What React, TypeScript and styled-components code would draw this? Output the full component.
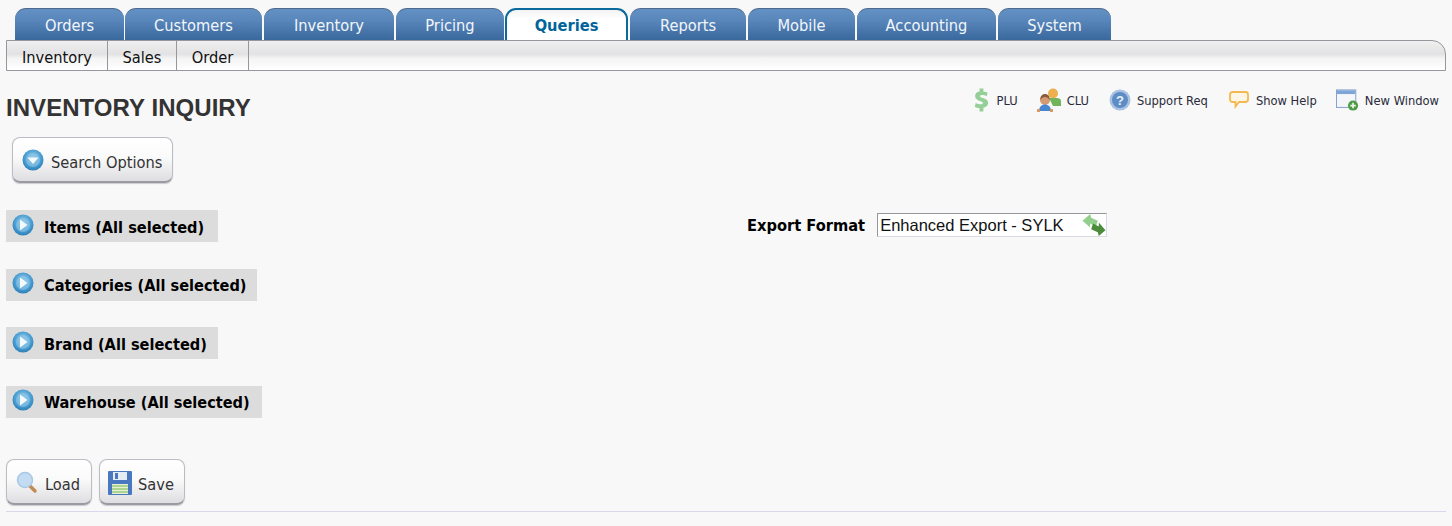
import React from "react"
import styled, { createGlobalStyle } from "styled-components"

const uiFont = `"DejaVu Sans Condensed", "DejaVu Sans", sans-serif`

const GlobalStyle = createGlobalStyle`
  html, body {
    margin: 0;
    padding: 0;
    background: #f8f8f8;
  }
  body {
    font-family: ${uiFont};
    font-stretch: condensed;
    color: #222;
  }
`

const Page = styled.div`
  width: 1452px;
  height: 526px;
  overflow: hidden;
  padding: 8px 6px 0;
  box-sizing: border-box;
`

const TabBar = styled.div`
  display: flex;
  height: 32px;
  padding-left: 9px;
`

const Tab = styled.div<{ $width: number; $gap: number; $active?: boolean }>`
  width: ${p => p.$width}px;
  margin-right: ${p => p.$gap}px;
  box-sizing: border-box;
  display: flex;
  align-items: center;
  justify-content: center;
  padding-top: ${p => (p.$active ? "0" : "2px")};
  border-radius: 11px 11px 0 0;
  font-size: 16.3px;
  color: ${p => (p.$active ? "#00649b" : "#f2f6fb")};
  font-weight: ${p => (p.$active ? "bold" : "normal")};
  border: ${p => (p.$active ? "2px solid #0a6a9c" : "0")};
  border-bottom: 0;
  border-top: ${p => (p.$active ? "2px solid #0a6a9c" : "1px solid #4d6a8e")};
  background: ${p =>
    p.$active
      ? "linear-gradient(#f3f3f3, #ffffff 30%)"
      : "linear-gradient(#6391c4, #5a87bb 35%, #39689d)"};
`

const SubBar = styled.div`
  display: flex;
  height: 31px;
  box-sizing: border-box;
  border: 1px solid #96969c;
  border-radius: 0 14px 0 0;
  background: linear-gradient(#f0f0f0, #e2e2e4 45%, #f4f4f4 60%, #ffffff);
`

const SubItem = styled.div<{ $width: number }>`
  width: ${p => p.$width}px;
  box-sizing: border-box;
  border-right: 1px solid #96969c;
  display: flex;
  align-items: center;
  justify-content: center;
  padding-top: 3px;
  font-size: 16.3px;
  color: #111;
`

const TitleRow = styled.div`
  display: flex;
  justify-content: space-between;
  height: 66px;
`

const Title = styled.h1`
  margin: 23px 0 0;
  font-family: "Liberation Sans", Arial, sans-serif;
  font-stretch: normal;
  font-size: 24px;
  line-height: 28px;
  font-weight: bold;
  letter-spacing: 0.05px;
  color: #333;
`

const QuickLinks = styled.div`
  display: flex;
  padding: 16px 7px 0 0;
  height: 26px;
`

const QuickLink = styled.div<{ $after?: number }>`
  display: flex;
  align-items: center;
  gap: 6px;
  margin-right: ${p => p.$after ?? 0}px;
  font-size: 12.8px;
  color: #2a2a3a;
`

const SearchButton = styled.div`
  display: inline-flex;
  align-items: center;
  box-sizing: border-box;
  gap: 7px;
  height: 46px;
  width: 161px;
  margin-left: 6px;
  padding-left: 9px;
  border: 1px solid #bcbcc4;
  border-bottom: 2px solid #9a9aa2;
  border-radius: 8px;
  box-shadow: 0 1px 1px #c8c8ce;
  font-size: 16.3px;
  color: #333;
  background: linear-gradient(#ffffff, #fafafa 45%, #dedee2);
`

const ButtonLabel = styled.span`
  margin-top: 6px;
`

const FormArea = styled.div`
  display: flex;
  margin-top: 27px;
`

const SectionColumn = styled.div`
  width: 741px;
  display: flex;
  flex-direction: column;
  align-items: flex-start;
  gap: 26.6px;
`

const Section = styled.div<{ $width: number }>`
  display: flex;
  align-items: center;
  width: ${p => p.$width}px;
  height: 32px;
  box-sizing: border-box;
  padding: 2px 0 0 6px;
  gap: 10px;
  background: #dcdcdc;
  font-size: 16.2px;
  font-weight: bold;
  color: #000;
  svg {
    margin-top: -5px;
  }
`

const ExportRow = styled.div`
  display: flex;
  align-items: center;
  height: 24px;
  margin-top: 3px;
  gap: 12px;
`

const ExportLabel = styled.label`
  font-size: 16.3px;
  font-weight: bold;
  color: #000;
`

const ExportSelect = styled.div`
  width: 230px;
  height: 24px;
  box-sizing: border-box;
  display: flex;
  align-items: center;
  justify-content: space-between;
  padding: 0 0 0 2px;
  border: 1px solid #dadae4;
  border-top-color: #96969c;
  border-left-color: #96969c;
  background: #fff;
  font-family: "Liberation Sans", Arial, sans-serif;
  font-stretch: normal;
  font-size: 16.5px;
  color: #111;
`

const ButtonRow = styled.div`
  display: flex;
  gap: 7px;
  margin-top: 41px;
`

const ActionButton = styled(SearchButton)`
  width: 86px;
  margin-left: 0;
  padding-left: 8px;
  gap: 6px;
  svg {
    margin-top: 3px;
  }
`

const Rule = styled.div`
  height: 1px;
  margin-top: 6px;
  background: #d8d8ea;
`

const Orb = ({ down }: { down?: boolean }) => (
  <svg width="22" height="22" viewBox="0 0 22 22">
    <defs>
      <radialGradient id={down ? "orbD" : "orbR"} cx="50%" cy="40%" r="60%">
        <stop offset="0%" stopColor="#a8d4ee" />
        <stop offset="65%" stopColor="#4a9ed2" />
        <stop offset="100%" stopColor="#2c7fb8" />
      </radialGradient>
    </defs>
    <circle cx="11" cy="11" r="10.5" fill={`url(#${down ? "orbD" : "orbR"})`} />
    <circle cx="11" cy="11" r="7" fill="#8cc4e6" opacity="0.6" />
    {down ? (
      <path d="M5.5 8.5h11L11 15z" fill="#f4f9fc" />
    ) : (
      <path d="M8 5.5v11l7.5-5.500z" fill="#f4f9fc" />
    )}
  </svg>
)

const DollarIcon = () => (
  <svg width="19" height="24" viewBox="0 0 20 24">
    <path
      d="M9 0h4v3c2 .2 3.500.7 4.500 1.300l-1 3.700c-1.300-.7-3-1.200-4.800-1.200-1.500 0-2.200.5-2.200 1.200 0 .8 1 1.300 3.300 2 3.500 1.100 5.200 2.700 5.200 5.200 0 2.500-1.800 4.400-5 4.900V24H9v-3.500c-2-.2-3.800-.8-5-1.500l1-3.800c1.400.8 3.300 1.400 5.100 1.400 1.500 0 2.400-.6 2.400-1.500 0-.9-.9-1.400-3-2.100C6.500 12 4.300 10.500 4.300 7.800 4.300 5.400 6 3.500 9 3z"
      fill="#93cf96"
    />
  </svg>
)

const UsersIcon = () => (
  <svg width="24" height="24" viewBox="0 0 24 24">
    <circle cx="16" cy="5.500" r="5" fill="#eeb04e" />
    <path d="M12 10h8c2 0 4 1 4 3v5h-8z" fill="#72b45c" />
    <circle cx="8" cy="12" r="5" fill="#d49a72" />
    <path d="M3.500 12c-.5-3.500 1.500-6 4.500-6s5 2.500 4.500 6c-1-2-2.500-3-4.500-3s-3.500 1-4.500 3z" fill="#8a5a3c" />
    <path d="M2 23c0-4 2.500-6.500 6-6.500s6 2.500 6 6.500z" fill="#4a86d0" />
    <path d="M0 21h3v3H0zM13 21h3v3h-3z" fill="#d89868" />
  </svg>
)

const HelpIcon = () => (
  <svg width="22" height="22" viewBox="0 0 22 22">
    <circle cx="11" cy="11" r="10.500" fill="#a9c2e2" />
    <circle cx="11" cy="11" r="8" fill="#5e8cc4" />
    <text
      x="11"
      y="15.500"
      fontSize="13"
      fontWeight="bold"
      textAnchor="middle"
      fill="#e8f0fa"
      fontFamily="Liberation Sans, sans-serif"
    >
      ?
    </text>
  </svg>
)

const BubbleIcon = () => (
  <svg width="21" height="18" viewBox="0 0 21 18">
    <path
      d="M3.500 1h13C18 1 19 2 19 3.500v5c0 1.500-1 2.500-2.500 2.500H10l-3.500 4.500V11h-3C2 11 1 10 1 8.500v-5C1 2 2 1 3.500 1z"
      fill="#fdf6e6"
      stroke="#f4b94e"
      strokeWidth="1.800"
    />
  </svg>
)

const WindowIcon = () => (
  <svg width="23" height="23" viewBox="0 0 25 24">
    <rect x="0.500" y="0.500" width="21" height="19" fill="#f4f6fa" stroke="#7a9ccc" />
    <rect x="1" y="1" width="20" height="4" fill="#7fa4d6" />
    <circle cx="18.500" cy="17.500" r="5.500" fill="#4f9a44" />
    <path d="M18.500 14.500v6M15.500 17.500h6" stroke="#eaf6e6" strokeWidth="1.800" />
  </svg>
)

const SwapIcon = () => (
  <svg width="24" height="22" viewBox="0 0 24 23">
    <path d="M0 7l8-7 1 4 7 3-2 6-6-3v4z" fill="#93cf8c" />
    <path d="M24 17l-7 6-1-4-7-3 2-6 6 3V9z" fill="#4c8b3c" />
  </svg>
)

const MagnifierIcon = () => (
  <svg width="24" height="24" viewBox="0 0 24 24">
    <path d="M15 15l5 5" stroke="#c48a52" strokeWidth="3.500" strokeLinecap="round" />
    <circle cx="10" cy="9" r="7.500" fill="#c4dcf2" stroke="#a8c8e6" strokeWidth="1.500" />
  </svg>
)

const FloppyIcon = () => (
  <svg width="24" height="24" viewBox="0 0 24 24">
    <rect x="0" y="0" width="24" height="24" rx="1" fill="#4a78c0" />
    <rect x="5" y="1" width="14" height="8" fill="#e4ecf6" />
    <rect x="7" y="2" width="3" height="6" fill="#4a78c0" />
    <rect x="4" y="13" width="16" height="10" fill="#e4f0d8" />
    <path d="M4 15h16M4 18h16M4 21h16" stroke="#9ccc74" strokeWidth="1.500" />
  </svg>
)

const tabs = [
  { label: "Orders", width: 109, gap: 1 },
  { label: "Customers", width: 137, gap: 2 },
  { label: "Inventory", width: 130, gap: 2 },
  { label: "Pricing", width: 108, gap: 1 },
  { label: "Queries", width: 123, gap: 2, active: true },
  { label: "Reports", width: 116, gap: 2 },
  { label: "Mobile", width: 107, gap: 2 },
  { label: "Accounting", width: 139, gap: 2 },
  { label: "System", width: 113, gap: 0 },
]

const subItems = [
  { label: "Inventory", width: 101 },
  { label: "Sales", width: 69 },
  { label: "Order", width: 72 },
]

const sections = [
  { label: "Items (All selected)", width: 212 },
  { label: "Categories (All selected)", width: 251 },
  { label: "Brand (All selected)", width: 212 },
  { label: "Warehouse (All selected)", width: 256 },
]

export default function App() {
  return (
    <Page>
      <GlobalStyle />
      <TabBar>
        {tabs.map(t => (
          <Tab key={t.label} $width={t.width} $gap={t.gap} $active={t.active}>
            {t.label}
          </Tab>
        ))}
      </TabBar>
      <SubBar>
        {subItems.map(s => (
          <SubItem key={s.label} $width={s.width}>
            {s.label}
          </SubItem>
        ))}
      </SubBar>
      <TitleRow>
        <Title>INVENTORY INQUIRY</Title>
        <QuickLinks>
          <QuickLink $after={19}>
            <DollarIcon />
            PLU
          </QuickLink>
          <QuickLink $after={20}>
            <UsersIcon />
            CLU
          </QuickLink>
          <QuickLink $after={21}>
            <HelpIcon />
            Support Req
          </QuickLink>
          <QuickLink $after={19}>
            <BubbleIcon />
            Show Help
          </QuickLink>
          <QuickLink>
            <WindowIcon />
            New Window
          </QuickLink>
        </QuickLinks>
      </TitleRow>
      <SearchButton>
        <Orb down />
        <ButtonLabel>Search Options</ButtonLabel>
      </SearchButton>
      <FormArea>
        <SectionColumn>
          {sections.map(s => (
            <Section key={s.label} $width={s.width}>
              <Orb />
              {s.label}
            </Section>
          ))}
        </SectionColumn>
        <ExportRow>
          <ExportLabel>Export Format</ExportLabel>
          <ExportSelect>
            Enhanced Export - SYLK
            <SwapIcon />
          </ExportSelect>
        </ExportRow>
      </FormArea>
      <ButtonRow>
        <ActionButton>
          <MagnifierIcon />
          <ButtonLabel>Load</ButtonLabel>
        </ActionButton>
        <ActionButton>
          <FloppyIcon />
          <ButtonLabel>Save</ButtonLabel>
        </ActionButton>
      </ButtonRow>
      <Rule />
    </Page>
  )
}
